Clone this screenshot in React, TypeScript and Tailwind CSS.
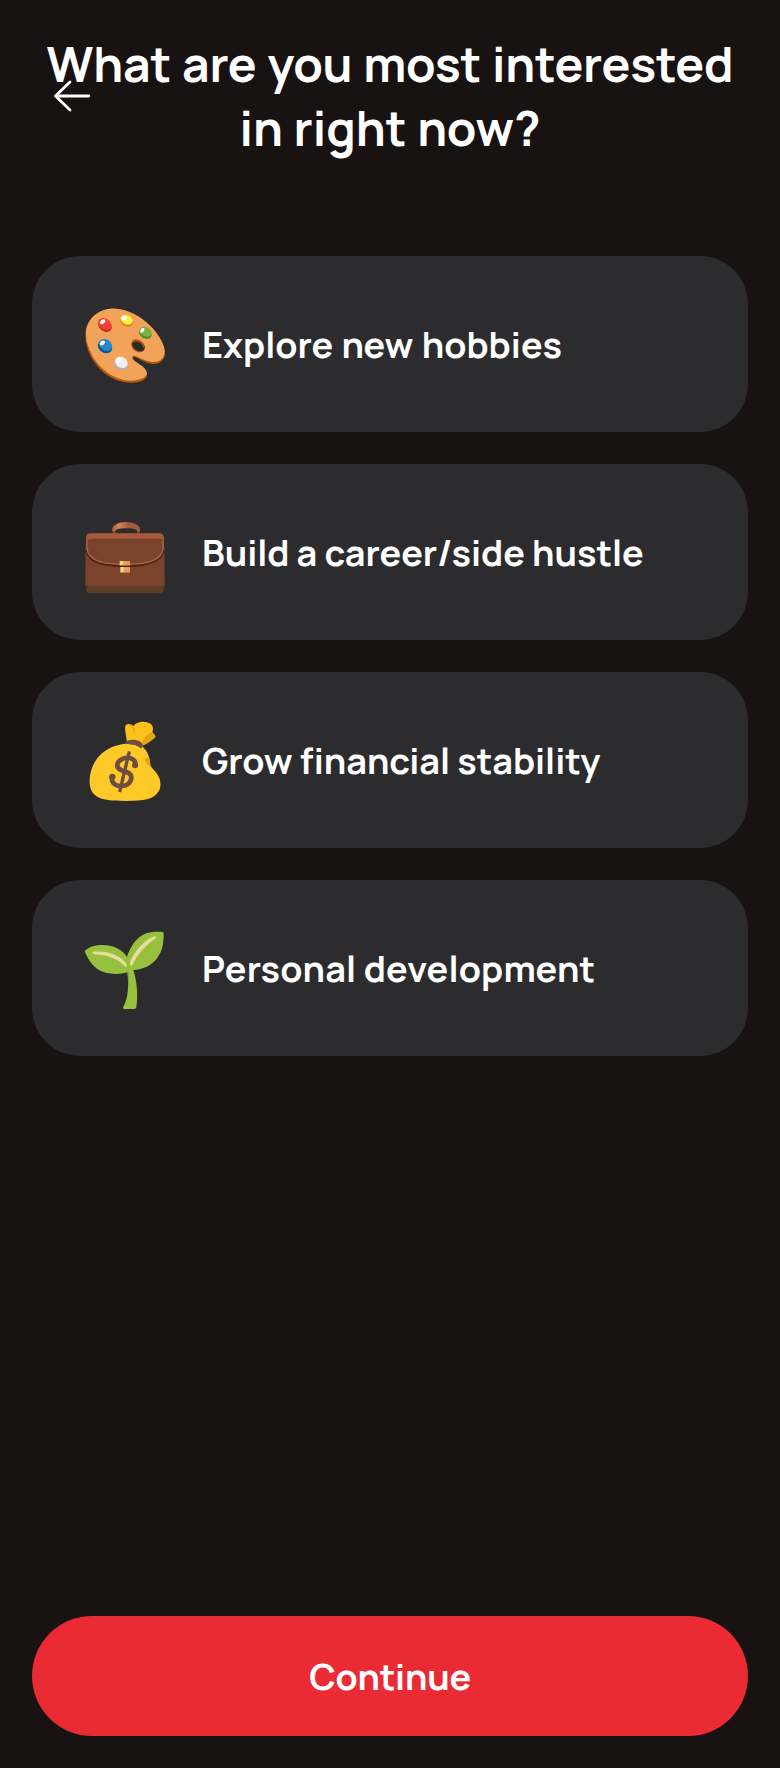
import type { ReactNode } from "react";

function Palette() {
  return (
    <svg viewBox="45 42 240 240" className="size-20 shrink-0 overflow-visible" aria-hidden="true">
      <g fillRule="evenodd">
        <path
          fill="#b4570c"
          d="M138 57C88 54 46 87 46 137C46 198 101 278 185 278C210 278 231 269 231 254C231 232 188 221 188 205C188 190 222 222 251 222C271 222 285 208 285 188C285 145 213 61 138 57ZM191 154C203 143 226 160 225 174C223 188 206 185 197 179C187 172 184 161 191 154Z"
        />
        <path
          fill="#f2a259"
          d="M138 56C89 53 48 85 48 131C48 190 103 271 185 272C209 272 231 262 231 250C231 227 185 216 187 201C190 187 219 216 251 216C271 216 284 204 284 184C284 141 213 60 138 56ZM190 150C204 142 226 159 225 175C220 193 200 187 191 179C183 171 181 157 190 150Z"
        />
      </g>
      <path fill="#2c2c2e" d="M190 156C202 150 219 164 221 178C216 187 202 184 194 177C187 171 184 161 190 156Z" />
      <path fill="none" stroke="#b4570c" strokeWidth="5" d="M189 155C199 147 220 156 222 173" />
      <ellipse cx="105" cy="107" rx="22" ry="17" transform="rotate(36 105 107)" fill="#c62828" />
      <ellipse cx="105" cy="102" rx="22" ry="16" transform="rotate(36 105 102)" fill="#f44336" />
      <ellipse cx="98" cy="95" rx="9" ry="6" transform="rotate(-35 98 95)" fill="#fff" />
      <ellipse cx="170" cy="94" rx="20" ry="15" transform="rotate(24 170 94)" fill="#df8500" />
      <ellipse cx="170" cy="89" rx="19" ry="14" transform="rotate(24 170 89)" fill="#ffee45" />
      <ellipse cx="162" cy="84" rx="8" ry="6" transform="rotate(-35 162 84)" fill="#fff" />
      <ellipse cx="226" cy="130" rx="20" ry="15" transform="rotate(30 226 130)" fill="#4c8c2b" />
      <ellipse cx="227" cy="125" rx="19" ry="14" transform="rotate(30 227 125)" fill="#7cb342" />
      <ellipse cx="217" cy="121" rx="8" ry="5" transform="rotate(-50 217 121)" fill="#fff" />
      <ellipse cx="105" cy="170" rx="23" ry="18" transform="rotate(34 105 170)" fill="#01579b" />
      <ellipse cx="107" cy="165" rx="21" ry="16" transform="rotate(34 107 165)" fill="#2686ca" />
      <ellipse cx="97" cy="159" rx="9" ry="6" transform="rotate(-40 97 159)" fill="#fff" />
      <ellipse cx="153" cy="222" rx="22" ry="17" transform="rotate(30 153 222)" fill="#b0b0b0" />
      <ellipse cx="154" cy="217" rx="20" ry="16" transform="rotate(30 154 217)" fill="#eee" />
      <ellipse cx="144" cy="211" rx="9" ry="6" transform="rotate(-40 144 211)" fill="#fff" />
    </svg>
  );
}

function Briefcase() {
  return (
    <svg viewBox="45 36 240 240" className="size-20 shrink-0 overflow-visible" aria-hidden="true">
      <defs>
        <linearGradient id="handle" x1="0" x2="1">
          <stop offset="0" stopColor="#a65a3c" />
          <stop offset=".25" stopColor="#d98455" />
          <stop offset=".6" stopColor="#a65a3c" />
          <stop offset="1" stopColor="#a65a3c" />
        </linearGradient>
        <linearGradient id="clasp" x1="0" x2="1">
          <stop offset="0" stopColor="#f6c57a" />
          <stop offset=".2" stopColor="#ffdf91" />
          <stop offset=".4" stopColor="#e8a265" />
          <stop offset="1" stopColor="#e09a60" />
        </linearGradient>
      </defs>
      <path fill="#874a33" d="M129 82L137 86V103H129ZM201 86L209 82V103H201Z" />
      <path
        fill="url(#handle)"
        d="M126 91C126 75 145 66 168 66C192 66 210 75 210 91C210 97 203 95 200 91C193 83 144 83 137 91C132 95 126 97 126 91Z"
      />
      <path fill="#7b432c" d="M49 108L47 138L46 258H284L283 138L280 108Z" />
      <path fill="#603c25" d="M46 248Q48 258 62 258H268Q281 258 284 248L281 271Q280 279 272 279H58Q50 279 49 271Z" />
      <path fill="none" stroke="#4b261d" strokeWidth="9" d="M50 150C57 192 115 197 165 197C218 197 274 190 280 150" />
      <path
        fill="#7b432c"
        stroke="#a9683f"
        strokeWidth="4"
        d="M51 112V146C55 187 112 193 165 193C218 193 275 187 279 147V112Z"
      />
      <path fill="#a65a3c" d="M49 115V110Q50 100 61 100H269Q280 100 281 111V118Q275 116 264 116H66Q54 116 52 122Z" />
      <path fill="#4b261d" d="M150 195H181V203H150Z" />
      <path fill="url(#clasp)" d="M149 183H180V196H149Z" />
      <path fill="url(#clasp)" d="M151 201H180V219H151Z" />
      <path fill="#a8653b" d="M149 195H181V198H149ZM151 217H180V220H151Z" />
    </svg>
  );
}

function MoneyBag() {
  return (
    <svg viewBox="45 30 240 240" className="size-20 shrink-0 overflow-visible" aria-hidden="true">
      <path
        fill="#fcc21b"
        d="M170 92C169 74 162 54 167 46C173 40 186 41 190 49C197 37 217 33 230 37C246 40 253 52 247 66L257 80C249 90 225 104 215 107Z"
      />
      <path fill="#e2a610" d="M189 49L192 77C194 68 195 60 193 53ZM213 105C219 86 231 71 245 67C252 72 257 76 256 81C244 93 226 105 215 107Z" />
      <path fill="#e2a610" d="M170 46C178 41 187 43 190 53L186 54C182 46 176 43 170 46Z" />
      <path
        fill="#ffca28"
        d="M165 101C133 105 96 119 75 155C57 186 51 232 72 253C88 269 115 273 170 273C219 273 252 269 266 244C278 222 270 196 246 174C236 163 241 149 235 136C229 119 218 108 207 105Z"
      />
      <path fill="#e2a610" d="M229 145C222 143 224 154 230 162C235 168 242 170 244 171C239 160 241 151 237 142Z" />
      <path fill="#6d4c41" d="M165 103C166 92 179 89 189 89C204 89 220 97 218 107L214 116C198 103 181 101 165 103Z" />
      <g fill="none" stroke="#6d4c41">
        <path
          strokeWidth="14"
          strokeLinecap="round"
          d="M196 166C199 147 177 139 159 146C137 155 137 174 155 181C167 186 183 187 184 202C184 220 168 229 151 228C133 227 123 216 126 201"
        />
        <path strokeWidth="10" d="M178 124L149 246" />
      </g>
      <circle cx="195" cy="166" r="9" fill="#6d4c41" />
      <circle cx="127" cy="201" r="9.5" fill="#6d4c41" />
    </svg>
  );
}

function Seedling() {
  return (
    <svg viewBox="45 39 240 240" className="size-20 shrink-0 overflow-visible" aria-hidden="true">
      <path
        fill="#97c13c"
        d="M44 108C53 98 72 90 97 90C134 90 158 105 171 126C180 96 199 67 225 56C240 50 262 50 278 51Q281 51 281 56C281 84 278 108 260 131C243 151 220 164 190 165C200 197 205 236 199 277Q198 282 193 282H163Q158 282 159 277C176 250 176 208 172 172C143 180 109 178 88 166C67 153 51 129 44 108Z"
      />
      <path fill="none" stroke="#689f38" strokeWidth="2" d="M175 172L176 210" />
      <path
        fill="#e6dc9d"
        d="M67 111C94 107 123 112 147 126C158 133 171 145 171 153C170 157 165 156 162 152C145 133 115 119 82 119C72 119 65 115 67 111ZM253 64C226 74 199 104 188 125C181 138 178 148 181 151C185 154 189 149 191 143C205 114 230 89 254 72C261 67 258 62 253 64Z"
      />
    </svg>
  );
}

interface Option {
  icon: ReactNode;
  label: string;
  spacing: string;
}

const options: Option[] = [
  { icon: <Palette />, label: "Explore new hobbies", spacing: "[word-spacing:1px]" },
  { icon: <Briefcase />, label: "Build a career/side hustle", spacing: "tracking-[-0.04px]" },
  { icon: <MoneyBag />, label: "Grow financial stability", spacing: "tracking-[-0.05px]" },
  { icon: <Seedling />, label: "Personal development", spacing: "tracking-[0.16px]" },
];

export default function App() {
  return (
    <main className="flex h-[1768px] w-[780px] flex-col bg-[#181212] px-8 pb-8 font-['Manrope','Inter',sans-serif] font-bold text-white">
      <header className="relative h-64 pt-8">
        <h1 className="text-center text-[48px] leading-16">
          <span className="block tracking-[-0.2px] whitespace-nowrap [word-spacing:1.5px]">What are you most interested</span>
          <span className="block whitespace-nowrap [word-spacing:1px]">in right now?</span>
        </h1>
        <button aria-label="Back" className="absolute top-[78px] left-[21px]">
          <svg width="38" height="36" viewBox="0 0 38 36" fill="none" stroke="white" strokeWidth="2.8" strokeLinecap="round" strokeLinejoin="round">
            <path d="M35.8 18H2.5M17 4L2.5 18L17 32" />
          </svg>
        </button>
      </header>
      <div className="flex flex-col gap-8">
        {options.map((option) => (
          <button key={option.label} className="flex h-44 items-center gap-[37px] rounded-[48px] bg-[#2c2c2e] pl-[53px] text-left text-[36px]">
            {option.icon}
            <span className={`pt-0.5 whitespace-nowrap ${option.spacing}`}>{option.label}</span>
          </button>
        ))}
      </div>
      <button className="mt-auto h-[120px] rounded-full bg-[#ea2b33] pt-0.5 text-[36px] tracking-[-0.25px]">Continue</button>
    </main>
  );
}
